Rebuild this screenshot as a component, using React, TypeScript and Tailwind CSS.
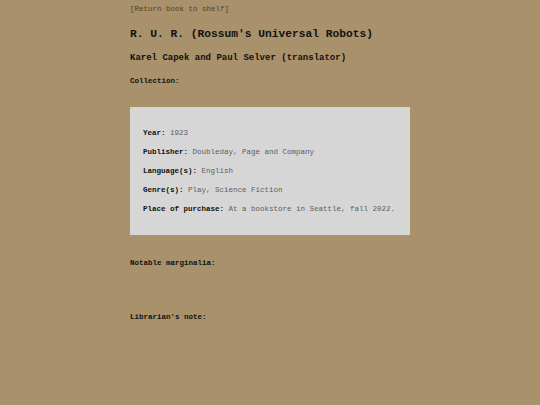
const details = [
  { label: 'Year', value: '1923' },
  { label: 'Publisher', value: 'Doubleday, Page and Company' },
  { label: 'Language(s)', value: 'English' },
  { label: 'Genre(s)', value: 'Play, Science Fiction' },
  { label: 'Place of purchase', value: 'At a bookstore in Seattle, fall 2022.' },
];

export default function App() {
  return (
    <div className="min-h-[405px] w-full bg-[#a8916b] font-['Liberation_Mono','Courier_New',monospace] text-[#111]">
      <div className="mx-auto w-[280px] pt-[5px]">
        <a href="#" className="block text-[7.5px] leading-[9px] text-[#5a4220]">
          [Return book to shelf]
        </a>

        <h1 className="mt-[13px] text-[11.25px] font-bold leading-[14px]">
          R. U. R. (Rossum's Universal Robots)
        </h1>

        <h2 className="mt-[12px] text-[9px] font-bold leading-[11px]">
          Karel Capek and Paul Selver (translator)
        </h2>

        <p className="mt-[13px] text-[7.5px] font-bold leading-[9px]">Collection:</p>

        {/* book details card */}
        <div className="mt-[21px] flex h-[128px] flex-col gap-[10px] bg-[#d6d6d6] pl-[13px] pt-[22px]">
          {details.map((d) => (
            <p key={d.label} className="text-[7.5px] leading-[9px]">
              <span className="font-bold">{d.label}:</span>{' '}
              <span className="text-[#5e5e5e]">{d.value}</span>
            </p>
          ))}
        </div>

        <p className="mt-[24px] text-[7.5px] font-bold leading-[9px]">Notable marginalia:</p>

        <p className="mt-[45px] text-[7.5px] font-bold leading-[9px]">Librarian's note:</p>
      </div>
    </div>
  );
}
